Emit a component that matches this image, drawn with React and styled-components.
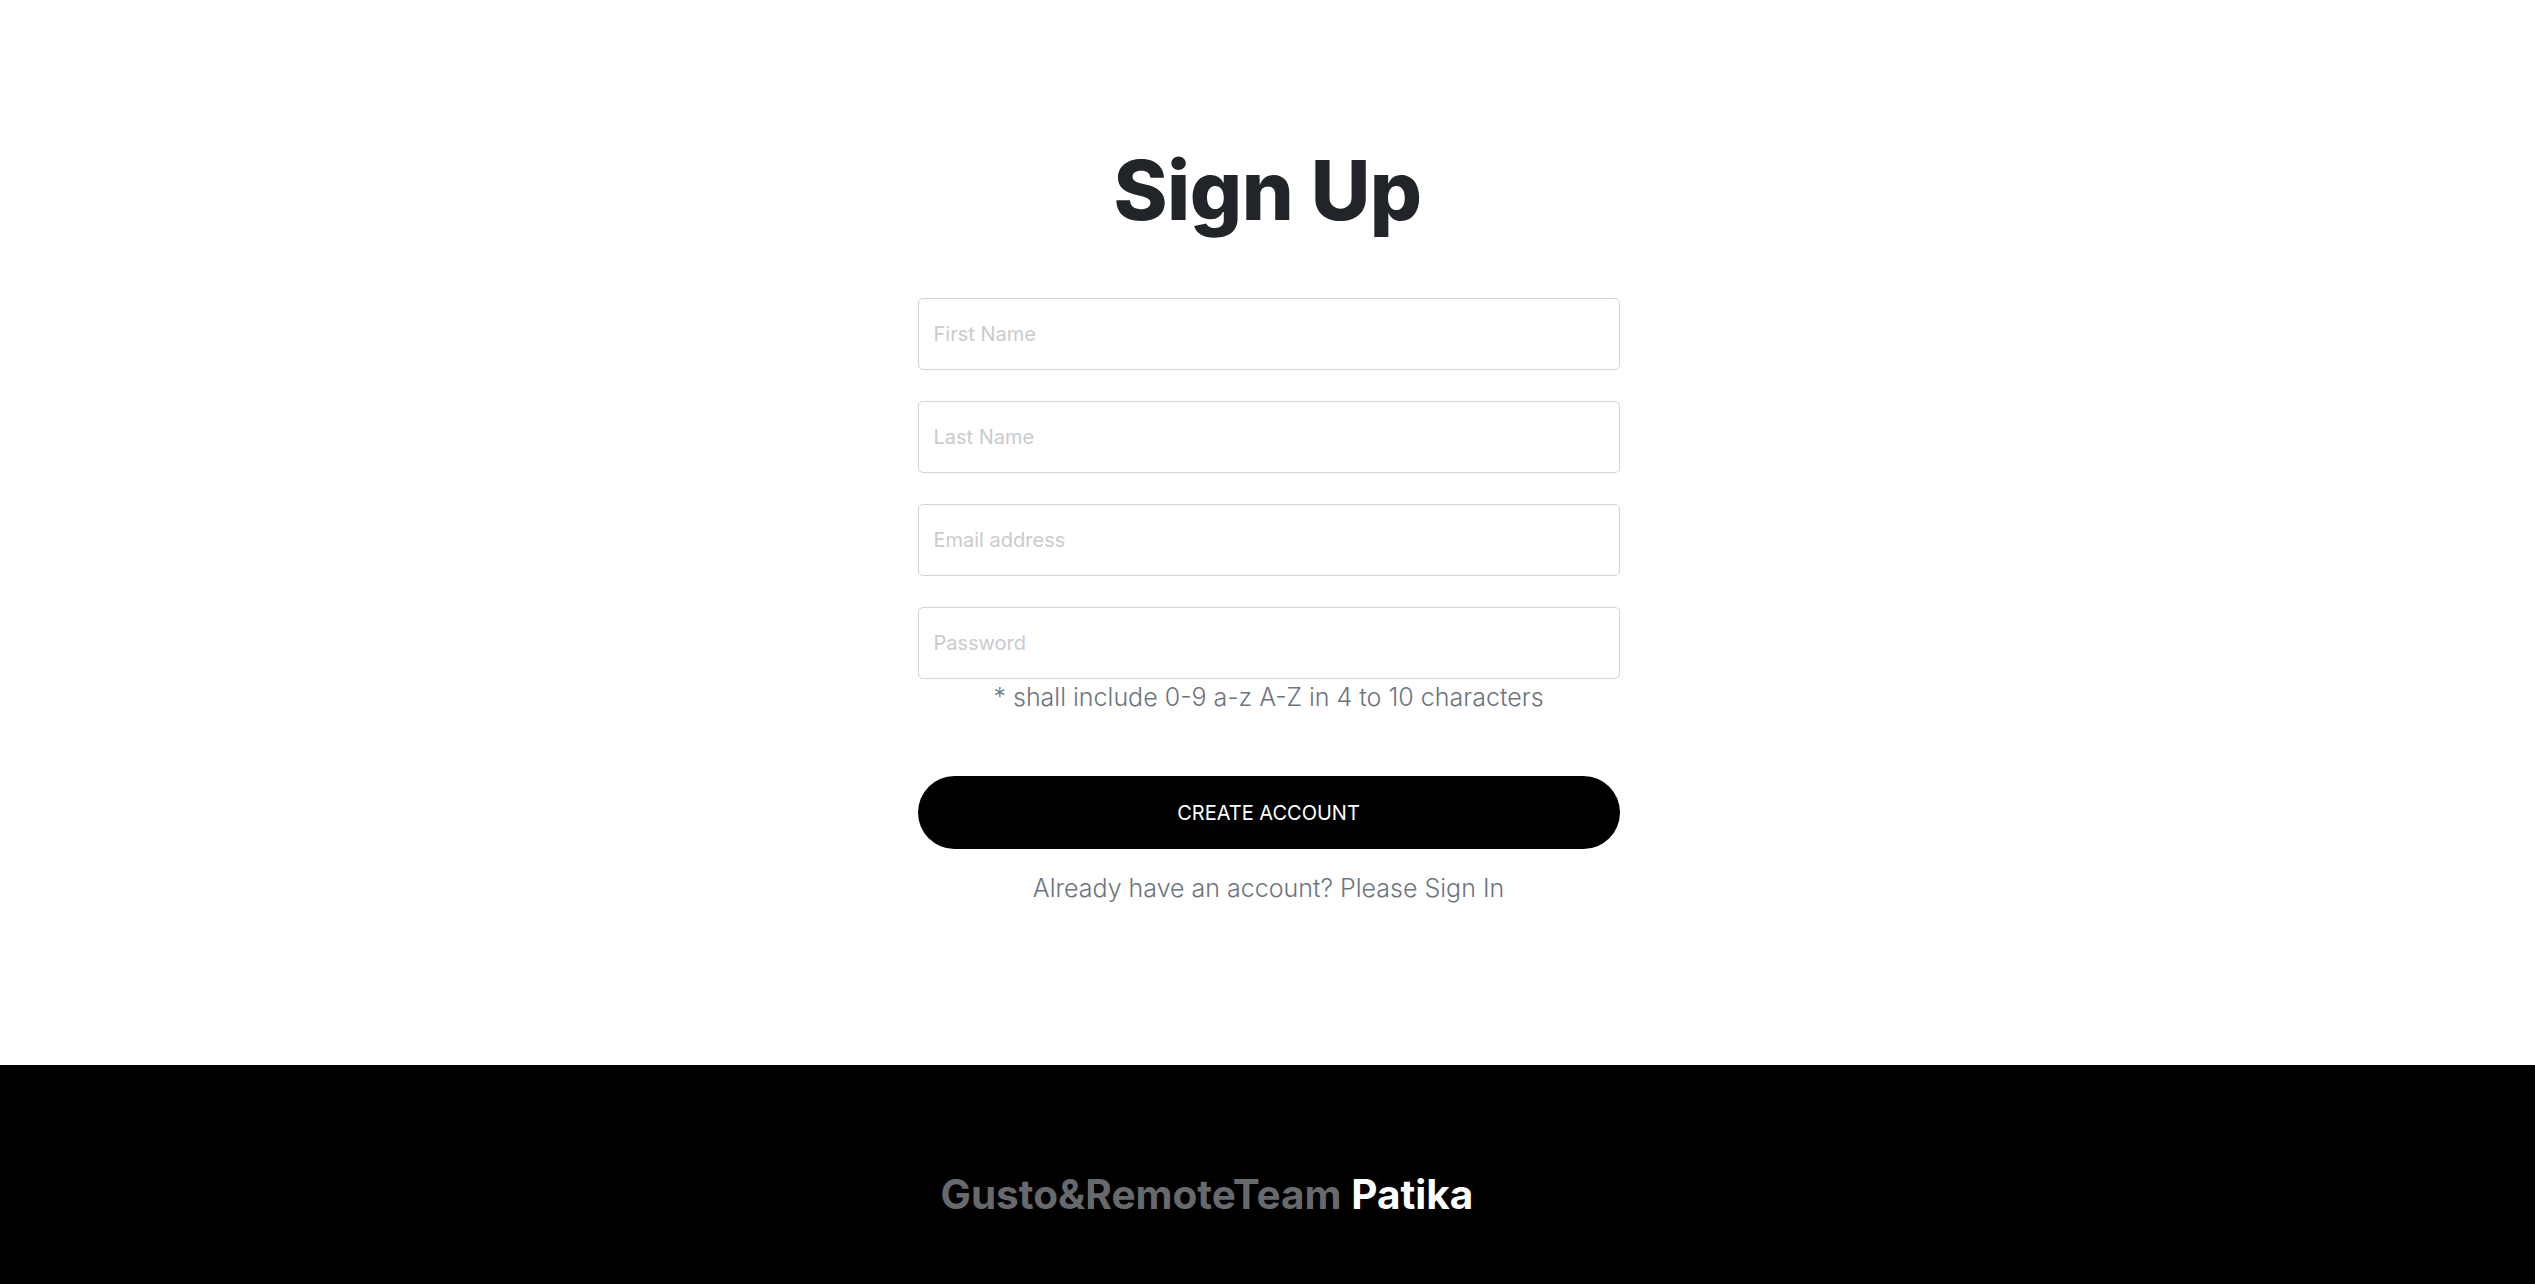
import React from "react";
import styled, { createGlobalStyle } from "styled-components";

const GlobalStyle = createGlobalStyle`
  *, *::before, *::after { box-sizing: border-box; }
  body {
    margin: 0;
    background: #ffffff;
    font-family: Inter, "Noto Sans", Roboto, sans-serif;
    color: #212529;
  }
`;

const Main = styled.main`
  display: flex;
  flex-direction: column;
  align-items: center;
  padding: 142px 0 159px;
`;

const Title = styled.h1`
  margin: 0 0 58px;
  font-size: 82px;
  line-height: 1.2;
  font-weight: 800;
  color: #212529;
  letter-spacing: -0.5px;
`;

const Form = styled.form`
  width: 702px;
  margin-left: 2px;
  display: flex;
  flex-direction: column;
  align-items: stretch;
`;

const Fields = styled.div`
  display: flex;
  flex-direction: column;
  gap: 31px;
`;

const Input = styled.input`
  width: 100%;
  height: 72px;
  padding: 20px 15px;
  font-family: Inter, sans-serif;
  font-size: 20px;
  line-height: 1.5;
  color: #212529;
  background: #fff;
  border: 1px solid #ced4da;
  border-radius: 5px;
  outline: none;
  &::placeholder {
    color: #c9cbce;
  }
`;

const Hint = styled.p`
  margin: 0;
  text-align: center;
  font-size: 25px;
  line-height: 36px;
  font-weight: 300;
  color: #6c757d;
`;

const SubmitButton = styled.button`
  margin-top: 61px;
  height: 73px;
  width: 100%;
  border: none;
  border-radius: 40px;
  background: #000;
  color: #fff;
  font-family: Inter, sans-serif;
  font-size: 20px;
  font-weight: 400;
  text-transform: uppercase;
  cursor: pointer;
`;

const SignInNote = styled.p`
  margin: 21px 0 0;
  text-align: center;
  font-size: 25px;
  line-height: 36px;
  font-weight: 300;
  color: #6c757d;
`;

const Footer = styled.footer`
  background: #000;
  padding: 106px 0 110px;
`;

const FooterInner = styled.div`
  width: 702px;
  margin: 0 auto;
  padding-left: 24px;
  font-size: 40.5px;
  line-height: 1.2;
  font-weight: 700;
`;

const Brand = styled.span`
  color: ${(p) => (p.$light ? "#ffffff" : "#67696c")};
`;

export default function App() {
  return (
    <>
      <GlobalStyle />
      <Main>
        <Title>Sign Up</Title>
        <Form onSubmit={(e) => e.preventDefault()}>
          <Fields>
            <Input type="text" placeholder="First Name" />
            <Input type="text" placeholder="Last Name" />
            <Input type="email" placeholder="Email address" />
            <Input type="password" placeholder="Password" />
          </Fields>
          <Hint>* shall include 0-9 a-z A-Z in 4 to 10 characters</Hint>
          <SubmitButton type="submit">Create Account</SubmitButton>
          <SignInNote>Already have an account? Please Sign In</SignInNote>
        </Form>
      </Main>
      <Footer>
        <FooterInner>
          <Brand>Gusto&amp;RemoteTeam</Brand> <Brand $light>Patika</Brand>
        </FooterInner>
      </Footer>
    </>
  );
}
